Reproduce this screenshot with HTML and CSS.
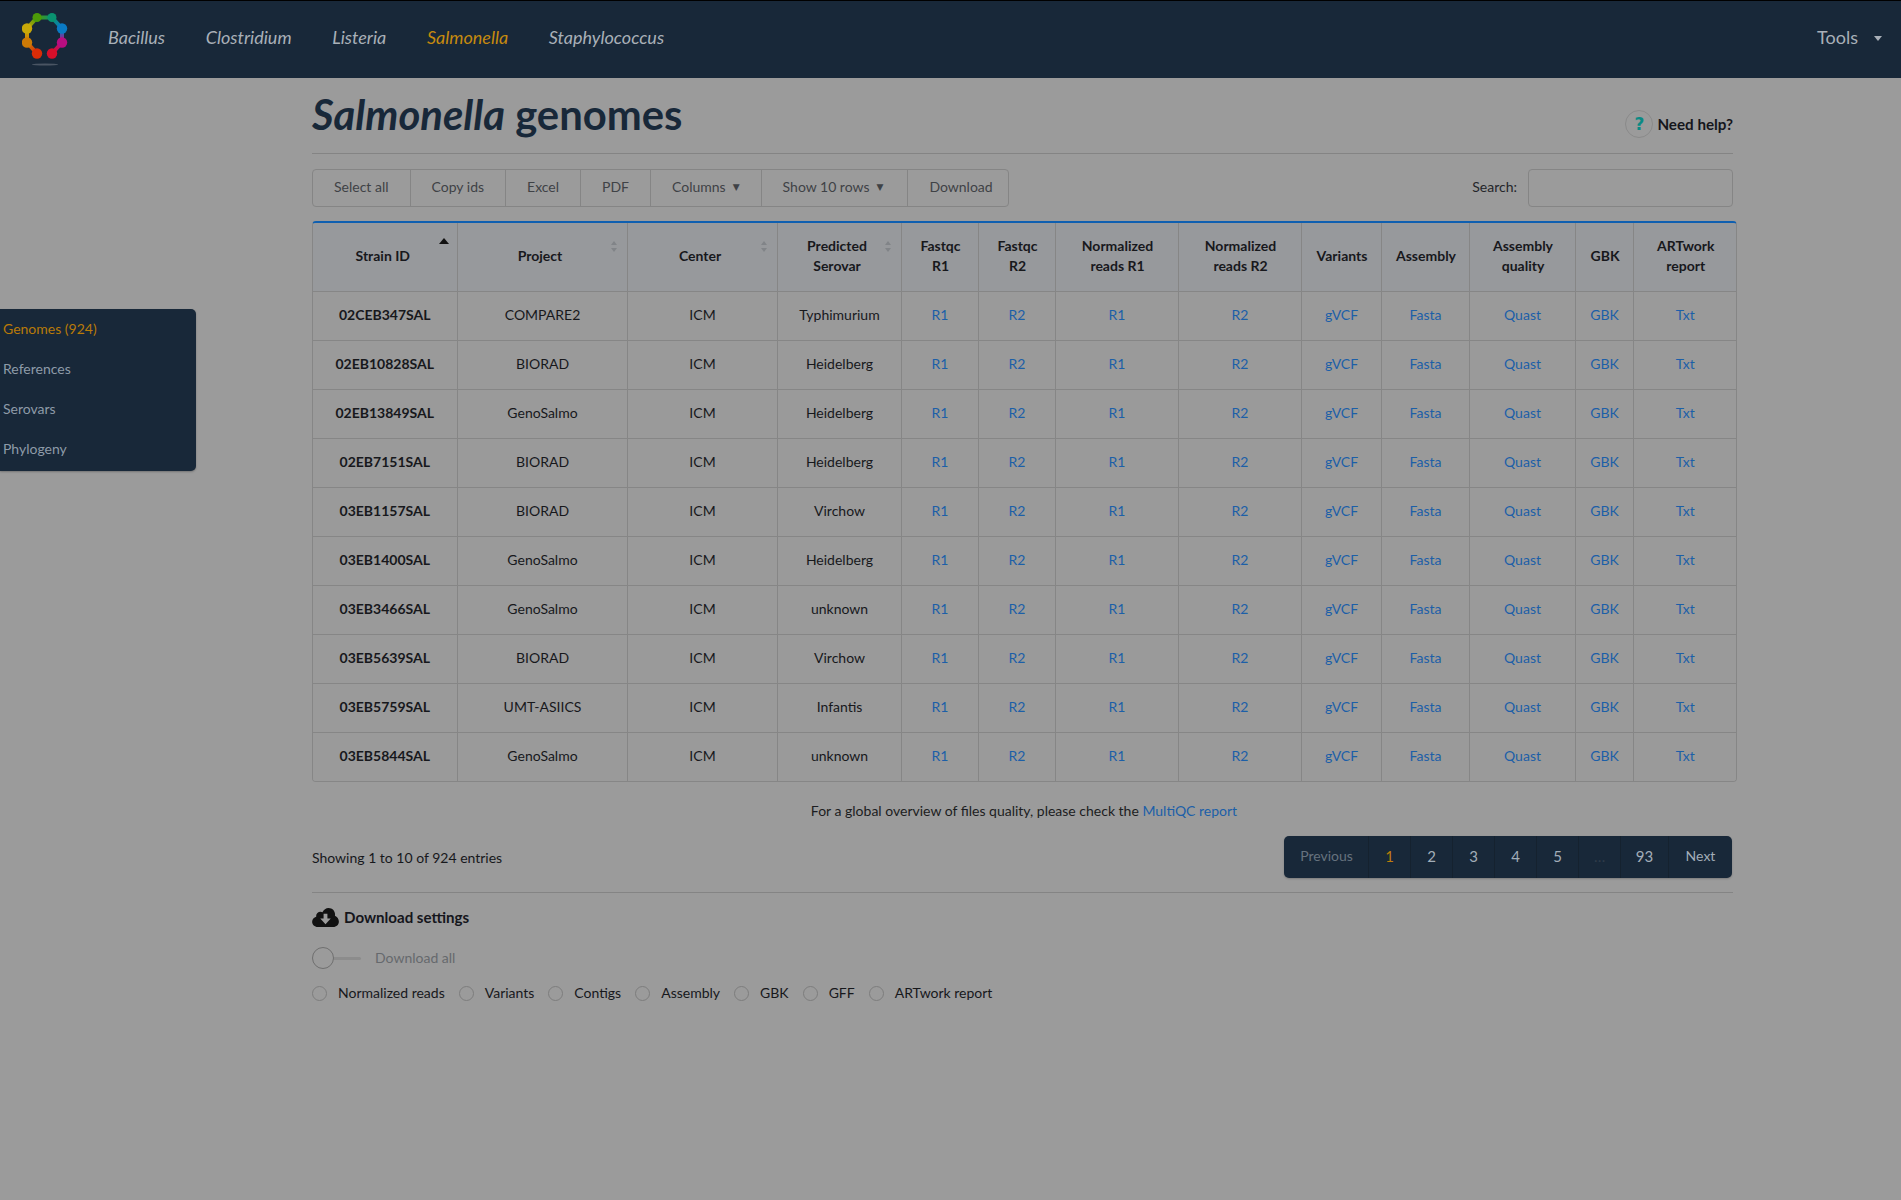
FILE: index.html
```html
<!DOCTYPE html>
<html lang="en">
<head>
<meta charset="utf-8">
<title>Salmonella genomes</title>
<link rel="stylesheet" href="styles.css">
</head>
<body>
<header class="navbar">
  <svg class="logo" viewBox="0 0 46 54" width="46" height="54" aria-hidden="true">
    <defs>
      <linearGradient id="g1" gradientUnits="userSpaceOnUse" x1="5" y1="29.500" x2="5" y2="15.500"><stop offset="0" stop-color="#cc7a06"/><stop offset="1" stop-color="#c8a808"/></linearGradient>
      <linearGradient id="g2" gradientUnits="userSpaceOnUse" x1="5" y1="15.500" x2="15" y2="4.500"><stop offset="0" stop-color="#c8a808"/><stop offset="1" stop-color="#4c9a08"/></linearGradient>
      <linearGradient id="g3" gradientUnits="userSpaceOnUse" x1="15" y1="4.500" x2="30" y2="4.500"><stop offset="0" stop-color="#4c9a08"/><stop offset="1" stop-color="#0a9270"/></linearGradient>
      <linearGradient id="g4" gradientUnits="userSpaceOnUse" x1="30" y1="4.500" x2="40" y2="15.500"><stop offset="0" stop-color="#0a9270"/><stop offset="1" stop-color="#0a7ac4"/></linearGradient>
      <linearGradient id="g5" gradientUnits="userSpaceOnUse" x1="40" y1="15.500" x2="40" y2="29.500"><stop offset="0" stop-color="#0a7ac4"/><stop offset="1" stop-color="#b80e80"/></linearGradient>
      <linearGradient id="g6" gradientUnits="userSpaceOnUse" x1="40" y1="29.500" x2="30" y2="40.500"><stop offset="0" stop-color="#b80e80"/><stop offset="1" stop-color="#d60f2a"/></linearGradient>
      <linearGradient id="g7" gradientUnits="userSpaceOnUse" x1="5" y1="29.500" x2="15" y2="40.500"><stop offset="0" stop-color="#cc7a06"/><stop offset="1" stop-color="#d92c08"/></linearGradient>
    </defs>
    <g fill="none" stroke-width="4">
      <path d="M5 29.500 L5.010 15.500" stroke="url(#g1)"/>
      <path d="M5 15.500 L15 4.500" stroke="url(#g2)"/>
      <path d="M15 4.500 L30 4.510" stroke="url(#g3)"/>
      <path d="M30 4.500 L40 15.500" stroke="url(#g4)"/>
      <path d="M40 15.500 L40.010 29.500" stroke="url(#g5)"/>
      <path d="M40 29.500 L30 40.500" stroke="url(#g6)"/>
      <path d="M5 29.500 L15 40.500" stroke="url(#g7)"/>
    </g>
    <circle cx="15" cy="40.500" r="5.200" fill="#d92c08"/>
    <circle cx="30" cy="40.500" r="5.200" fill="#d60f2a"/>
    <circle cx="40" cy="29.500" r="5.200" fill="#b80e80"/>
    <circle cx="40" cy="15.500" r="5.200" fill="#0a7ac4"/>
    <circle cx="30" cy="4.500" r="4.500" fill="#0a9270"/>
    <circle cx="15" cy="4.500" r="4.500" fill="#4c9a08"/>
    <circle cx="5" cy="15.500" r="5.200" fill="#c8a808"/>
    <circle cx="5" cy="29.500" r="5.200" fill="#cc7a06"/>
    <ellipse cx="23" cy="51.500" rx="13" ry="1" fill="#4a5563"/>
  </svg>
  <nav class="nav-links">
    <a>Bacillus</a>
    <a>Clostridium</a>
    <a>Listeria</a>
    <a class="active">Salmonella</a>
    <a>Staphylococcus</a>
  </nav>
  <a class="tools">Tools <span class="caret"></span></a>
</header>

<div class="page">
  <aside class="side">
    <a class="active">Genomes (924)</a>
    <a>References</a>
    <a>Serovars</a>
    <a>Phylogeny</a>
  </aside>

  <main class="content">
    <div class="title-row">
      <h1><em>Salmonella</em> genomes</h1>
      <a class="help"><span class="help-icon">?</span>Need help?</a>
    </div>

    <div class="toolbar">
      <div class="btn-group">
        <span class="btn">Select all</span>
        <span class="btn">Copy ids</span>
        <span class="btn">Excel</span>
        <span class="btn">PDF</span>
        <span class="btn">Columns <i>▼</i></span>
        <span class="btn btn-rows">Show 10 rows <i>▼</i></span>
        <span class="btn btn-last">Download</span>
      </div>
      <label class="search"><span class="search-text">Search:</span><span class="search-input"></span></label>
    </div>

    <div class="table-wrap">
      <table class="genomes">
        <colgroup>
          <col class="c1"><col class="c2"><col class="c3"><col class="c4"><col class="c5"><col class="c6"><col class="c7"><col class="c8"><col class="c9"><col class="c10"><col class="c11"><col class="c12"><col class="c13">
        </colgroup>
        <thead>
          <tr>
            <th class="sort"><span class="arrow-up"></span>Strain ID</th>
            <th class="sort"><span class="updown"></span>Project</th>
            <th class="sort"><span class="updown"></span>Center</th>
            <th class="sort"><span class="updown"></span>Predicted<br>Serovar</th>
            <th>Fastqc<br>R1</th><th>Fastqc<br>R2</th>
            <th>Normalized<br>reads R1</th><th>Normalized<br>reads R2</th>
            <th>Variants</th><th>Assembly</th><th>Assembly<br>quality</th><th>GBK</th><th>ARTwork<br>report</th>
          </tr>
        </thead>
        <tbody>
          <tr><td class="id">02CEB347SAL</td><td>COMPARE2</td><td>ICM</td><td>Typhimurium</td><td><a>R1</a></td><td><a>R2</a></td><td><a>R1</a></td><td><a>R2</a></td><td><a>gVCF</a></td><td><a>Fasta</a></td><td><a>Quast</a></td><td><a>GBK</a></td><td><a>Txt</a></td></tr>
          <tr><td class="id">02EB10828SAL</td><td>BIORAD</td><td>ICM</td><td>Heidelberg</td><td><a>R1</a></td><td><a>R2</a></td><td><a>R1</a></td><td><a>R2</a></td><td><a>gVCF</a></td><td><a>Fasta</a></td><td><a>Quast</a></td><td><a>GBK</a></td><td><a>Txt</a></td></tr>
          <tr><td class="id">02EB13849SAL</td><td>GenoSalmo</td><td>ICM</td><td>Heidelberg</td><td><a>R1</a></td><td><a>R2</a></td><td><a>R1</a></td><td><a>R2</a></td><td><a>gVCF</a></td><td><a>Fasta</a></td><td><a>Quast</a></td><td><a>GBK</a></td><td><a>Txt</a></td></tr>
          <tr><td class="id">02EB7151SAL</td><td>BIORAD</td><td>ICM</td><td>Heidelberg</td><td><a>R1</a></td><td><a>R2</a></td><td><a>R1</a></td><td><a>R2</a></td><td><a>gVCF</a></td><td><a>Fasta</a></td><td><a>Quast</a></td><td><a>GBK</a></td><td><a>Txt</a></td></tr>
          <tr><td class="id">03EB1157SAL</td><td>BIORAD</td><td>ICM</td><td>Virchow</td><td><a>R1</a></td><td><a>R2</a></td><td><a>R1</a></td><td><a>R2</a></td><td><a>gVCF</a></td><td><a>Fasta</a></td><td><a>Quast</a></td><td><a>GBK</a></td><td><a>Txt</a></td></tr>
          <tr><td class="id">03EB1400SAL</td><td>GenoSalmo</td><td>ICM</td><td>Heidelberg</td><td><a>R1</a></td><td><a>R2</a></td><td><a>R1</a></td><td><a>R2</a></td><td><a>gVCF</a></td><td><a>Fasta</a></td><td><a>Quast</a></td><td><a>GBK</a></td><td><a>Txt</a></td></tr>
          <tr><td class="id">03EB3466SAL</td><td>GenoSalmo</td><td>ICM</td><td>unknown</td><td><a>R1</a></td><td><a>R2</a></td><td><a>R1</a></td><td><a>R2</a></td><td><a>gVCF</a></td><td><a>Fasta</a></td><td><a>Quast</a></td><td><a>GBK</a></td><td><a>Txt</a></td></tr>
          <tr><td class="id">03EB5639SAL</td><td>BIORAD</td><td>ICM</td><td>Virchow</td><td><a>R1</a></td><td><a>R2</a></td><td><a>R1</a></td><td><a>R2</a></td><td><a>gVCF</a></td><td><a>Fasta</a></td><td><a>Quast</a></td><td><a>GBK</a></td><td><a>Txt</a></td></tr>
          <tr><td class="id">03EB5759SAL</td><td>UMT-ASIICS</td><td>ICM</td><td>Infantis</td><td><a>R1</a></td><td><a>R2</a></td><td><a>R1</a></td><td><a>R2</a></td><td><a>gVCF</a></td><td><a>Fasta</a></td><td><a>Quast</a></td><td><a>GBK</a></td><td><a>Txt</a></td></tr>
          <tr><td class="id">03EB5844SAL</td><td>GenoSalmo</td><td>ICM</td><td>unknown</td><td><a>R1</a></td><td><a>R2</a></td><td><a>R1</a></td><td><a>R2</a></td><td><a>gVCF</a></td><td><a>Fasta</a></td><td><a>Quast</a></td><td><a>GBK</a></td><td><a>Txt</a></td></tr>
        </tbody>
      </table>
    </div>

    <p class="overview">For a global overview of files quality, please check the <a>MultiQC report</a></p>

    <div class="table-foot">
      <span>Showing 1 to 10 of 924 entries</span>
      <ul class="pagination">
        <li class="prev">Previous</li>
        <li class="active">1</li>
        <li>2</li>
        <li>3</li>
        <li>4</li>
        <li>5</li>
        <li class="gap">…</li>
        <li class="last">93</li>
        <li class="next">Next</li>
      </ul>
    </div>

    <section class="settings">
      <h2>
        <svg class="cloud" viewBox="0 0 28 22" width="27" height="21" aria-hidden="true">
          <path d="M6 21 C2.500 21 0 18.500 0 15.500 C0 12.800 1.900 10.700 4.300 10.200 C4.300 9.900 4.200 9.600 4.200 9.300 C4.200 6.700 6.300 4.900 8.700 4.900 C9.500 4.900 10.200 5.100 10.800 5.400 C12.100 2.700 14.500 1 17.200 1 C21 1 24 4 24 7.700 C24 8.300 24 8.700 23.900 9.200 C26.300 10.200 28 12.500 28 15.200 C28 18.500 25.500 21 22 21 Z" fill="#111"/>
          <path d="M12 7 H16 V12 H19.500 L14 18 L8.500 12 H12 Z" fill="#9b9b9b"/>
        </svg>
        Download settings
      </h2>
      <div class="toggle-row">
        <span class="toggle"><span class="knob"></span></span>
        <span class="toggle-label">Download all</span>
      </div>
      <div class="checks">
        <label><span class="radio"></span>Normalized reads</label>
        <label><span class="radio"></span>Variants</label>
        <label><span class="radio"></span>Contigs</label>
        <label><span class="radio"></span>Assembly</label>
        <label><span class="radio"></span>GBK</label>
        <label><span class="radio"></span>GFF</label>
        <label><span class="radio"></span>ARTwork report</label>
      </div>
    </section>
  </main>
</div>
</body>
</html>
```
FILE: styles.css
```css
* { box-sizing: border-box; }
html, body { margin: 0; height: 100%; }
body {
  background: #9b9b9b;
  color: #17181c;
  font: 14px/20px Lato, "Open Sans", sans-serif;
  overflow: hidden;
}
a { color: #1c5fa8; text-decoration: none; }

.navbar {
  height: 78px;
  background: #182839;
  border-top: 1px solid #000;
  display: flex;
  align-items: center;
  padding: 0 19px 0 22px;
}
.logo { flex: none; }
.nav-links { display: flex; gap: 40.600px; margin-left: 40px; padding-bottom: 5px; font-size: 18px; font-style: italic; font-weight: 400; }
.nav-links a { color: #a9b0b8; }
.nav-links a.active { color: #c68a0e; }
.tools { margin-left: auto; padding-bottom: 5px; color: #a9b0b8; font-size: 18px; font-weight: 400; display: flex; align-items: center; }
.caret {
  width: 0; height: 0; margin-left: 16px; margin-top: 3px;
  border-left: 4.500px solid transparent;
  border-right: 4.500px solid transparent;
  border-top: 5px solid #a9b0b8;
}

.page {
  display: grid;
  grid-template-columns: 196px 1421px;
  column-gap: 116px;
  align-items: start;
}
.side {
  margin-top: 231px;
  height: 162px;
  background: #182839;
  border-radius: 0 5px 5px 0;
  box-shadow: 0 1px 2px rgba(0,0,0,.25);
  display: flex;
  flex-direction: column;
  padding: 0 3px;
}
.side a { height: 40px; line-height: 40px; color: #8e9ba8; flex: none; }
.side a.active { color: #b97a08; }

.title-row {
  height: 76px;
  border-bottom: 1px solid #848484;
  display: flex;
  justify-content: space-between;
  align-items: flex-start;
}
h1 { margin: 13px 0 0; font-size: 41.800px; line-height: 46px; font-weight: 700; color: #182839; }
.help { display: flex; align-items: center; gap: 4px; color: #15161c; font-size: 15.200px; font-weight: 700; margin-top: 32px; }
.help-icon {
  width: 28px; height: 28px; border-radius: 50%;
  border: 1px solid #8a8a8a;
  color: #0a8a84; font: bold 17px/1 "DejaVu Sans", sans-serif;
  display: flex; align-items: center; justify-content: center;
}

.toolbar { display: flex; justify-content: space-between; margin-top: 15px; height: 38px; }
.btn-group { display: flex; border: 1px solid #858585; border-radius: 4px; color: #3f4246; }
.btn { display: flex; align-items: center; gap: 7px; padding: 0 21px 2px; border-left: 1px solid #858585; white-space: nowrap; }
.btn:first-child { border-left: 0; }
.btn-rows { padding-right: 24px; }
.btn-last { padding-right: 15px; }
.btn i { font: normal 9px/20px "DejaVu Sans", sans-serif; }
.search { display: flex; align-items: center; gap: 11px; color: #24262a; }
.search-text { padding-bottom: 2px; }
.search-input { width: 205px; height: 38px; border: 1px solid #858585; border-radius: 4px; }

.table-wrap {
  width: 1425px;
  margin-top: 14px;
  border: 1px solid #868686;
  border-top: 2px solid #0f5fb0;
  border-radius: 4px;
  overflow: hidden;
}
.genomes { width: 100%; border-collapse: collapse; table-layout: fixed; text-align: center; }
.genomes th {
  position: relative;
  height: 68px;
  padding: 0 5px 2px 7px;
  background: #97999c;
  font-weight: 700;
  line-height: 20px;
  border-left: 1px solid #868686;
  color: #17181c;
}
.genomes th.sort { padding-right: 11px; }
.genomes td {
  height: 49px;
  padding: 0 4px 2px 5px;
  background: #9a9a9a;
  border-top: 1px solid #868686;
  border-left: 1px solid #868686;
}
.genomes th:first-child, .genomes td:first-child { border-left: 0; }
.genomes td.id { font-weight: 700; padding: 0 4px 2px; }

.c1 { width: 144px; } .c2 { width: 170px; } .c3 { width: 150px; } .c4 { width: 124px; }
.c5 { width: 77px; } .c6 { width: 77px; } .c7 { width: 123px; } .c8 { width: 123px; }
.c9 { width: 80px; } .c10 { width: 88px; } .c11 { width: 106px; } .c12 { width: 58px; } .c13 { width: 103px; }

.arrow-up {
  position: absolute; right: 8px; top: 15px;
  width: 0; height: 0;
  border-left: 5px solid transparent;
  border-right: 5px solid transparent;
  border-bottom: 6px solid #111;
}
.updown { position: absolute; right: 9px; top: 18px; width: 7px; height: 11px; }
.updown::before, .updown::after {
  content: ""; position: absolute; left: 0;
  border-left: 3.500px solid transparent;
  border-right: 3.500px solid transparent;
}
.updown::before { top: 0; border-bottom: 4px solid #818488; }
.updown::after { bottom: 0; border-top: 4px solid #818488; }

.overview { margin: 19px 0 0; padding-left: 3px; text-align: center; color: #1c1d21; }

.table-foot { display: flex; justify-content: space-between; align-items: center; margin-top: 15px; height: 42px; }
.table-foot > span { margin-top: 2px; }
.pagination {
  list-style: none; margin: 0 1px 0 0; padding: 0;
  display: flex; height: 42px; background: #182839;
  border-radius: 5px; color: #a2adb8; font-size: 15px;
  box-shadow: 0 1px 2px rgba(0,0,0,.2);
}
.pagination li { width: 42px; line-height: 40px; text-align: center; border-left: 1px solid #15222f; }
.pagination li:first-child { border-left: 0; }
.pagination .prev { width: 84px; color: #66727e; font-size: 14px; padding-left: 1px; }
.pagination .active { color: #bd7d0c; }
.pagination .gap { color: #2f3c4a; }
.pagination .last { width: 48px; }
.pagination .next { width: 64px; font-size: 14px; }

.settings { margin-top: 14px; border-top: 1px solid #848484; }
.settings h2 { display: flex; align-items: center; gap: 5px; margin: 12px 0 0; font-size: 15.100px; line-height: 24px; font-weight: 700; color: #15161c; height: 23px; }
.cloud { flex: none; margin-top: 2px; }
.toggle-row { display: flex; align-items: center; margin-top: 19px; height: 22px; }
.toggle { display: flex; align-items: center; width: 49px; height: 3px; background: #8c8c8c; border-radius: 2px; }
.knob { width: 22px; height: 22px; border-radius: 50%; border: 1px solid #6f6f6f; background: #9b9b9b; flex: none; }
.toggle-label { margin-left: 14px; color: #66696d; }
.checks { display: flex; margin-top: 13px; height: 22px; align-items: center; color: #17181c; }
.checks label { display: flex; align-items: center; gap: 11px; margin-right: 14px; }
.radio { width: 15px; height: 15px; border-radius: 50%; border: 1px solid #7d7d7d; flex: none; }
```
